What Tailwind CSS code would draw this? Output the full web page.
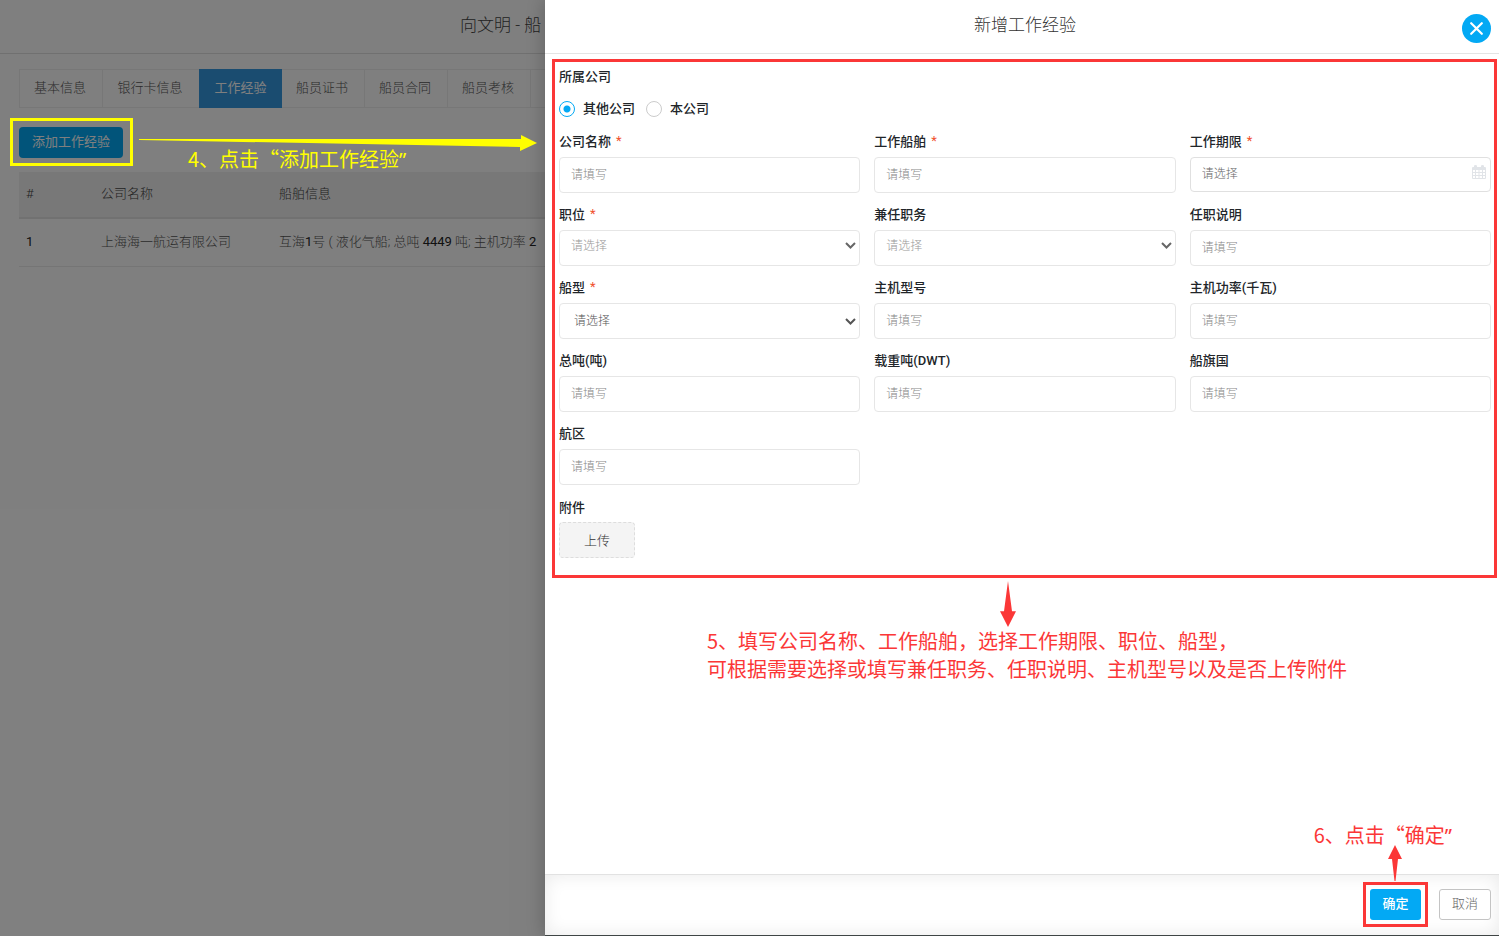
<!DOCTYPE html>
<html lang="zh-CN">
<head>
<meta charset="utf-8">
<title>新增工作经验</title>
<script src="https://cdn.jsdelivr.net/npm/@tailwindcss/browser@4"></script>
</head>
<body class="relative h-screen overflow-hidden bg-white font-['Roboto','Noto_Sans_CJK_SC',sans-serif] text-[13px] leading-5 text-[#212529]">

<!-- Crew page behind the drawer -->
<main class="font-light">
  <header class="flex h-[54px] items-center border-b border-[#e0e0e0] pb-1 pl-[460px] text-[17px] text-[#444]"><h1>向文明&nbsp;-&nbsp;船</h1></header>
  <nav class="mx-[19px] mt-[15px] flex h-[39px] border border-[#eee] text-[#555]">
    <a href="#" class="flex w-[83px] items-center justify-center border-r border-[#eee] pb-0.5 pr-0.5">基本信息</a>
    <a href="#" class="flex w-24 items-center justify-center pb-0.5 pr-0.5">银行卡信息</a>
    <a href="#" class="-my-px flex w-[83px] items-center justify-center bg-[#3598e0] pb-0.5 font-normal text-white">工作经验</a>
    <a href="#" class="flex w-[83px] items-center justify-center border-r border-[#eee] pb-0.5 pr-0.5">船员证书</a>
    <a href="#" class="flex w-[83px] items-center justify-center border-r border-[#eee] pb-0.5 pr-0.5">船员合同</a>
    <a href="#" class="flex w-[83px] items-center justify-center border-r border-[#eee] pb-0.5 pr-0.5">船员考核</a>
  </nav>
  <div class="mx-[19px] mt-[19px]">
    <button type="button" class="h-[31px] w-[104px] rounded bg-[#03a9f4] pb-0.5 font-normal text-white">添加工作经验</button>
  </div>
  <div class="mx-[19px] mt-[14px]">
    <table class="w-full table-fixed border-collapse text-left text-[#555]">
      <colgroup><col class="w-[75px]"><col class="w-[178px]"><col></colgroup>
      <thead>
        <tr class="h-[46px] border-b-2 border-[#e3e3e3] bg-[#f0f0f0] text-[#444]">
          <th class="px-[7px] pb-0.5 font-light">#</th><th class="px-[7px] pb-0.5 font-light">公司名称</th><th class="px-[7px] pb-0.5 font-light">船舶信息</th>
        </tr>
      </thead>
      <tbody>
        <tr class="h-12 border-b border-[#eaeaea]">
          <td class="px-[7px] font-normal text-[#222]">1</td><td class="px-[7px]">上海海一航运有限公司</td>
          <td class="whitespace-nowrap px-[7px]">互海<span class="font-normal text-[#222]">1</span>号 ( 液化气船; 总吨 <span class="font-normal text-[#222]">4449</span> 吨; 主机功率 <span class="font-normal text-[#222]">2</span></td>
        </tr>
      </tbody>
    </table>
  </div>
</main>
<div class="absolute inset-0 bg-black/50"></div>

<!-- Drawer -->
<aside class="absolute inset-y-0 left-[545px] right-0 flex flex-col border-b border-[#3f4545] bg-white shadow-[-2px_0_16px_rgba(0,0,0,0.2)]">
  <header class="relative flex h-[54px] shrink-0 items-center justify-center border-b border-[#e4e4e4] pb-1 pl-1.5">
    <h2 class="text-[17px] font-light text-[#333]">新增工作经验</h2>
    <button type="button" aria-label="关闭" class="absolute right-2 top-[14px] flex size-[29px] items-center justify-center rounded-full bg-[#03a9f4]">
      <svg class="size-[13px]" viewBox="0 0 13 13" fill="none" stroke="#fff" stroke-width="2.200" stroke-linecap="round"><path d="M1.200 1.200l10.600 10.600M11.800 1.200L1.200 11.800"/></svg>
    </button>
  </header>

  <div class="min-h-0 flex-1">
    <form id="exp" class="ml-[7px] mr-0.5 mt-[5px] border-[3px] border-[#fb3737] pb-[17px] pl-1 pr-[3px] pt-[5px] font-medium">
      <fieldset>
        <legend>所属公司</legend>
        <div class="mt-3 flex items-center">
          <label class="flex items-center gap-2"><input type="radio" name="owner" checked class="size-4 appearance-none rounded-full border border-[#ccc] checked:border-[#03a9f4] checked:bg-[radial-gradient(circle,#03a9f4_3px,transparent_4px)]">其他公司</label>
          <label class="ml-[11px] flex items-center gap-2"><input type="radio" name="owner" class="size-4 appearance-none rounded-full border border-[#ccc] checked:border-[#03a9f4] checked:bg-[radial-gradient(circle,#03a9f4_3px,transparent_4px)]">本公司</label>
        </div>
      </fieldset>
      <div class="mt-[13px] grid grid-cols-3 gap-x-[14px] gap-y-3">
        <div>
          <label for="f1" class="flex gap-[5px]">公司名称<span class="font-normal leading-[18px] text-[#f0502d]">*</span></label>
          <input id="f1" type="text" placeholder="请填写" class="mt-[5px] block h-9 w-full rounded border border-[#e6e6e6] px-[11px] text-xs font-light placeholder:text-[#888]">
        </div>
        <div>
          <label for="f2" class="flex gap-[5px]">工作船舶<span class="font-normal leading-[18px] text-[#f0502d]">*</span></label>
          <input id="f2" type="text" placeholder="请填写" class="mt-[5px] block h-9 w-full rounded border border-[#e6e6e6] px-[11px] text-xs font-light placeholder:text-[#888]">
        </div>
        <div>
          <label for="f3" class="flex gap-[5px]">工作期限<span class="font-normal leading-[18px] text-[#f0502d]">*</span></label>
          <div class="relative mt-[5px]">
            <input id="f3" type="text" placeholder="请选择" class="block h-[35px] w-full rounded border border-[#e0e0e0] px-[11px] pb-0.5 text-xs font-light placeholder:text-[#666]">
            <svg class="absolute right-[5px] top-2 h-[14px] w-[14px]" viewBox="0 0 14 14"><path fill="#e1e4e8" fill-rule="evenodd" d="M1 2h1V1q0-1 1.500-1T5 1v1h4V1q0-1 1.500-1T12 1v1h1q1 0 1 1v10q0 1-1 1H1q-1 0-1-1V3q0-1 1-1zM1 5v2h2V5zM4 5v2h2.500V5zM7.500 5v2H10V5zM11 5v2h2V5zM1 8v2h2V8zM4 8v2h2.500V8zM7.500 8v2H10V8zM11 8v2h2V8zM1 11v2h2v-2zM4 11v2h2.500v-2zM7.500 11v2H10v-2zM11 11v2h2v-2z"/></svg>
          </div>
        </div>
        <div>
          <label for="f4" class="flex gap-[5px]">职位<span class="font-normal leading-[18px] text-[#f0502d]">*</span></label>
          <div class="relative mt-[5px]">
            <select id="f4" class="block h-9 w-full appearance-none rounded border border-[#e6e6e6] px-[11px] pb-1 text-xs font-light text-[#999]"><option>请选择</option></select>
            <svg class="pointer-events-none absolute right-1 top-3 h-[7px] w-[11px]" viewBox="0 0 11 7" fill="none" stroke="#666" stroke-width="2"><path d="M1 1l4.500 4.500L10 1"/></svg>
          </div>
        </div>
        <div>
          <label for="f5" class="block">兼任职务</label>
          <div class="relative mt-[5px]">
            <select id="f5" class="block h-9 w-full appearance-none rounded border border-[#e6e6e6] px-[11px] pb-1 text-xs font-light text-[#999]"><option>请选择</option></select>
            <svg class="pointer-events-none absolute right-1 top-3 h-[7px] w-[11px]" viewBox="0 0 11 7" fill="none" stroke="#666" stroke-width="2"><path d="M1 1l4.500 4.500L10 1"/></svg>
          </div>
        </div>
        <div>
          <label for="f6" class="block">任职说明</label>
          <input id="f6" type="text" placeholder="请填写" class="mt-[5px] block h-9 w-full rounded border border-[#e6e6e6] px-[11px] text-xs font-light placeholder:text-[#888]">
        </div>
        <div>
          <label for="f7" class="flex gap-[5px]">船型<span class="font-normal leading-[18px] text-[#f0502d]">*</span></label>
          <div class="relative mt-[5px]">
            <select id="f7" class="block h-9 w-full appearance-none rounded border border-[#e6e6e6] px-[14px] text-xs font-light text-[#555]"><option>请选择</option></select>
            <svg class="pointer-events-none absolute right-1 top-[15px] h-[7px] w-[11px]" viewBox="0 0 11 7" fill="none" stroke="#555" stroke-width="2"><path d="M1 1l4.500 4.500L10 1"/></svg>
          </div>
        </div>
        <div>
          <label for="f8" class="block">主机型号</label>
          <input id="f8" type="text" placeholder="请填写" class="mt-[5px] block h-9 w-full rounded border border-[#e6e6e6] px-[11px] text-xs font-light placeholder:text-[#888]">
        </div>
        <div>
          <label for="f9" class="block">主机功率(千瓦)</label>
          <input id="f9" type="text" placeholder="请填写" class="mt-[5px] block h-9 w-full rounded border border-[#e6e6e6] px-[11px] text-xs font-light placeholder:text-[#888]">
        </div>
        <div>
          <label for="f10" class="block">总吨(吨)</label>
          <input id="f10" type="text" placeholder="请填写" class="mt-[5px] block h-9 w-full rounded border border-[#e6e6e6] px-[11px] text-xs font-light placeholder:text-[#888]">
        </div>
        <div>
          <label for="f11" class="block">载重吨(DWT)</label>
          <input id="f11" type="text" placeholder="请填写" class="mt-[5px] block h-9 w-full rounded border border-[#e6e6e6] px-[11px] text-xs font-light placeholder:text-[#888]">
        </div>
        <div>
          <label for="f12" class="block">船旗国</label>
          <input id="f12" type="text" placeholder="请填写" class="mt-[5px] block h-9 w-full rounded border border-[#e6e6e6] px-[11px] text-xs font-light placeholder:text-[#888]">
        </div>
        <div>
          <label for="f13" class="block">航区</label>
          <input id="f13" type="text" placeholder="请填写" class="mt-[5px] block h-9 w-full rounded border border-[#e6e6e6] px-[11px] text-xs font-light placeholder:text-[#888]">
        </div>
      </div>
      <div class="mt-[13px]">
        <span id="att" class="block">附件</span>
        <button type="button" aria-describedby="att" class="mt-1 block h-9 w-[76px] rounded border border-dashed border-[#ddd] bg-[#f4f4f4] pt-0.5 font-light text-[#333]">上传</button>
      </div>
    </form>

    <!-- Step 5 note -->
    <div class="ml-[162px] mt-[3px] text-xl leading-7 text-[#fb3737] font-['Noto_Sans_CJK_SC',sans-serif]">
      <svg class="ml-[293px] h-[46px] w-4" viewBox="0 0 16 47" preserveAspectRatio="none" fill="#fb3737"><path d="M8 0L12 31H16L8 47L0 31H4z"/></svg>
      <p>5、填写公司名称、工作船舶，选择工作期限、职位、船型，<br>可根据需要选择或填写兼任职务、任职说明、主机型号以及是否上传附件</p>
    </div>
  </div>

  <footer class="flex h-[61px] shrink-0 items-start justify-end gap-[11px] border-t border-[#e2e2e2] pr-2 pt-[7px] shadow-[inset_0_0_18px_rgba(0,0,0,0.09)]">
    <div class="border-[3px] border-[#fb3737] p-1"><button type="submit" form="exp" class="block h-[31px] w-[51px] rounded-[3px] bg-[#03a9f4] pb-0.5 font-medium text-white">确定</button></div>
    <button type="button" class="mt-[7px] h-[31px] w-[52px] rounded-[3px] border border-[#c4c4c4] bg-white pb-0.5 font-light text-[#666]">取消</button>
  </footer>
</aside>

<!-- Step 4 note -->
<div class="absolute left-[10px] top-[118px] h-12 w-[123px] border-[3px] border-[#ff0]"></div>
<svg class="absolute left-[139px] top-[134px] h-[18px] w-[399px]" viewBox="0 0 399 18" fill="#ff0"><path d="M0 5H382V1L398 9L381 17V13L0 6z"/></svg>
<p class="absolute left-[188px] top-[145px] text-xl leading-7 text-[#ff0] font-['Noto_Sans_CJK_SC',sans-serif]">4、点击“添加工作经验<span class="font-['Noto_Sans',sans-serif]">”</span></p>

<!-- Step 6 note -->
<p class="absolute bottom-[86px] right-[47px] text-xl leading-7 text-[#fb3737] font-['Noto_Sans_CJK_SC',sans-serif]">6、点击“确定<span class="font-['Noto_Sans',sans-serif]">”</span></p>
<svg class="absolute bottom-[55px] right-[97px] h-9 w-[14px]" viewBox="0 0 14 36" fill="#fb3737"><path d="M7 0L14 14H10L7.500 36H6.500L4 14H0z"/></svg>
</body>
</html>
